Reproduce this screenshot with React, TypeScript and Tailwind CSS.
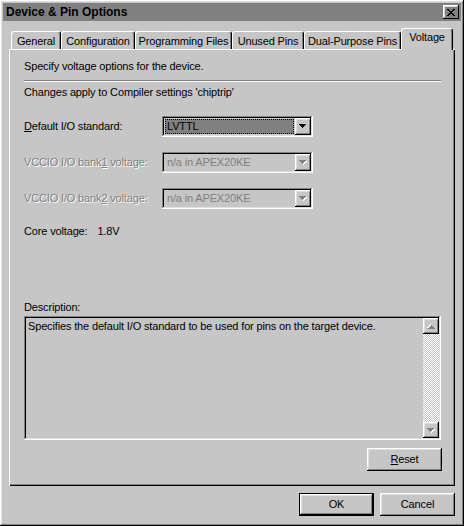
const raised =
  "shadow-[inset_-1px_-1px_#000,inset_1px_1px_#fff,inset_-2px_-2px_#808080,inset_2px_2px_#dfdfdf]";
const sunken =
  "shadow-[inset_-1px_-1px_#fff,inset_1px_1px_#808080,inset_-2px_-2px_#dfdfdf,inset_2px_2px_#000]";
const dim = "text-[#808080] [text-shadow:1px_1px_0_#fff]";

const tabs = [
  { label: "General", cls: "w-[50px]" },
  { label: "Configuration", cls: "w-[74px]" },
  { label: "Programming Files", cls: "w-[97px]" },
  { label: "Unused Pins", cls: "w-[72px]" },
  { label: "Dual-Purpose Pins", cls: "w-[97px]" },
];

const Arrow = ({ up, disabled }: { up?: boolean; disabled?: boolean }) => (
  <svg width="8" height="5" viewBox="0 0 8 5" shapeRendering="crispEdges" className={up ? "rotate-180" : ""}>
    {disabled && (
      <g fill="#fff" transform="translate(1 1)">
        <rect x="0" y="0" width="7" height="1" />
        <rect x="1" y="1" width="5" height="1" />
        <rect x="2" y="2" width="3" height="1" />
        <rect x="3" y="3" width="1" height="1" />
      </g>
    )}
    <g fill={disabled ? "#808080" : "#000"}>
      <rect x="0" y="0" width="7" height="1" />
      <rect x="1" y="1" width="5" height="1" />
      <rect x="2" y="2" width="3" height="1" />
      <rect x="3" y="3" width="1" height="1" />
    </g>
  </svg>
);

const Combo = ({ value, disabled }: { value: string; disabled?: boolean }) => (
  <div className={`w-[151px] h-[21px] p-[2px] flex bg-[#c6c6c6] ${sunken}`}>
    <div className="flex-1 flex items-center pl-[1px] pr-[1px]">
      {disabled ? (
        <span className="pl-[2px] text-[#808080]">{value}</span>
      ) : (
        <span className="w-full h-[15px] bg-[#808080] outline-1 outline-dotted outline-black -outline-offset-1 pl-[2px] leading-[15px]">
          {value}
        </span>
      )}
    </div>
    <div className={`w-[16px] h-[17px] flex items-center justify-center ${raised}`}>
      <Arrow disabled={disabled} />
    </div>
  </div>
);

const Button = ({ children, isDefault }: { children: React.ReactNode; isDefault?: boolean }) => (
  <div className={`w-[75px] h-[23px] ${isDefault ? "border border-black" : ""}`}>
    <div className={`w-full h-full flex items-center justify-center ${raised}`}>{children}</div>
  </div>
);

export default function App() {
  return (
    <div
      className={`w-[464px] h-[526px] p-[3px] bg-[#c6c6c6] text-black text-[11px] leading-[13px] tracking-[-0.15px] font-['Liberation_Sans',Arial,sans-serif] flex flex-col ${raised}`}
    >
      <div className="h-[18px] bg-[#808080] flex items-center justify-between pl-[3px] pr-[2px]">
        <span className="font-bold text-[12px] tracking-normal">Device &amp; Pin Options</span>
        <div className={`w-[16px] h-[14px] flex items-center justify-center ${raised}`}>
          <svg width="8" height="7" viewBox="0 0 8 7" shapeRendering="crispEdges">
            <path d="M0 0h2v1h-2zM6 0h2v1h-2zM1 1h2v1h-2zM5 1h2v1h-2zM2 2h4v1h-4zM3 3h2v1h-2zM2 4h4v1h-4zM1 5h2v1h-2zM5 5h2v1h-2zM0 6h2v1h-2zM6 6h2v1h-2z" fill="#000" />
          </svg>
        </div>
      </div>

      <div className="ml-[6px] mt-[7px] w-[446px]">
        <div className="h-[21px] flex items-end pl-[2px]">
          {tabs.map(t => (
            <div
              key={t.label}
              className={`${t.cls} h-[18px] border-l border-t border-white border-r border-r-black rounded-t-[3px] shadow-[inset_-1px_0_#808080] flex justify-center pt-[3px]`}
            >
              {t.label}
            </div>
          ))}
          <div className="w-[52px] h-[22px] -mb-[1px] relative z-10 bg-[#c6c6c6] border-l border-t border-white border-r border-r-black rounded-t-[3px] shadow-[inset_-1px_0_#808080] flex justify-center pt-[2px]">
            Voltage
          </div>
        </div>

        <div className="h-[437px] pl-[15px] pr-[13px] pt-[11px] flex flex-col shadow-[inset_1px_1px_#fff,inset_-1px_-1px_#000,inset_-2px_-2px_#808080]">
          <div>Specify voltage options for the device.</div>
          <div className="mt-[7px] h-[2px] w-[417px] border-t border-[#808080] border-b border-b-white" />
          <div className="mt-[4px]">Changes apply to Compiler settings 'chiptrip'</div>

          <div className="mt-[17px] flex items-center">
            <span className="w-[138px]">
              <u>D</u>efault I/O standard:
            </span>
            <Combo value="LVTTL" />
          </div>
          <div className="mt-[15px] flex items-center">
            <span className={`w-[138px] ${dim}`}>
              VCCIO I/O bank<u>1</u> voltage:
            </span>
            <Combo value="n/a in APEX20KE" disabled />
          </div>
          <div className="mt-[15px] flex items-center">
            <span className={`w-[138px] ${dim}`}>
              VCCIO I/O bank<u>2</u> voltage:
            </span>
            <Combo value="n/a in APEX20KE" disabled />
          </div>

          <div className="mt-[16px] flex">
            <span>Core voltage:</span>
            <span className="ml-[10px]">1.8V</span>
          </div>

          <div className="mt-[63px]">Description:</div>
          <div className={`mt-[2px] w-[417px] h-[124px] p-[2px] flex ${sunken}`}>
            <div className="flex-1 pl-[2px] pt-[2px]">
              Specifies the default I/O standard to be used for pins on the target device.
            </div>
            <div className="w-[16px] flex flex-col bg-[image:repeating-conic-gradient(#fff_0_25%,#c6c6c6_0_50%)] bg-[length:2px_2px]">
              <div className={`h-[16px] bg-[#c6c6c6] flex items-center justify-center ${raised}`}>
                <Arrow up disabled />
              </div>
              <div className="flex-1" />
              <div className={`h-[16px] bg-[#c6c6c6] flex items-center justify-center ${raised}`}>
                <Arrow disabled />
              </div>
            </div>
          </div>

          <div className="mt-[8px] flex justify-end">
            <Button>
              <u>R</u>eset
            </Button>
          </div>
        </div>
      </div>

      <div className="mt-[7px] mr-[6px] flex justify-end gap-[6px]">
        <Button isDefault>OK</Button>
        <Button>Cancel</Button>
      </div>
    </div>
  );
}
